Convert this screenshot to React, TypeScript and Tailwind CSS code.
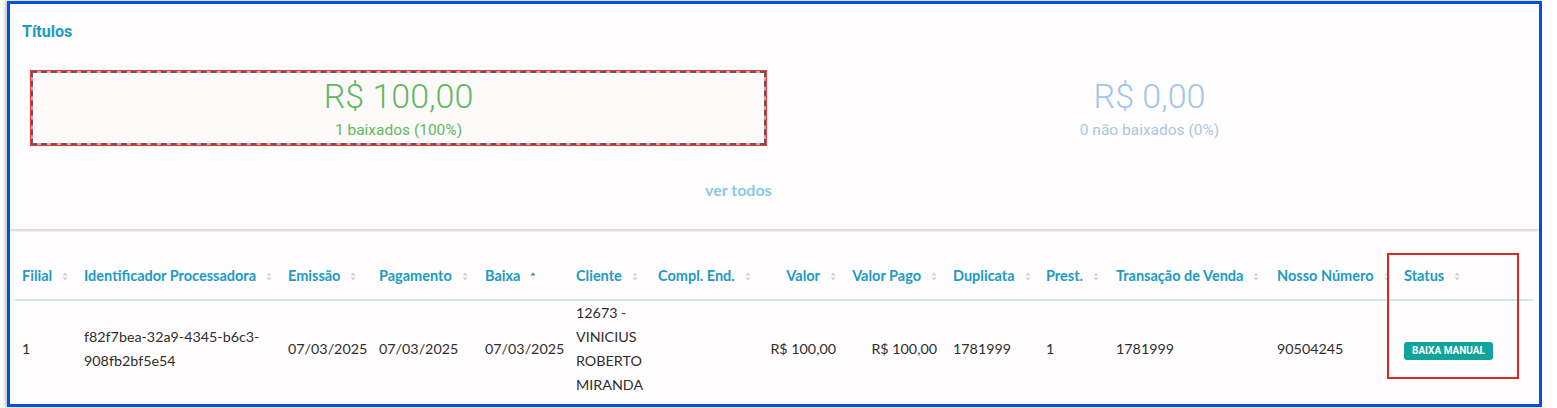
import React from "react";

type Col = {
  label: string;
  width: string;
  right?: boolean;
  active?: boolean;
};

const columns: Col[] = [
  { label: "Filial", width: "w-[62px]" },
  { label: "Identificador Processadora", width: "w-[204px]" },
  { label: "Emissão", width: "w-[91px]" },
  { label: "Pagamento", width: "w-[106px]" },
  { label: "Baixa", width: "w-[91px]", active: true },
  { label: "Cliente", width: "w-[82px]" },
  { label: "Compl. End.", width: "w-[110px]" },
  { label: "Valor", width: "w-[84px]", right: true },
  { label: "Valor Pago", width: "w-[101px]", right: true },
  { label: "Duplicata", width: "w-[93px]" },
  { label: "Prest.", width: "w-[70px]" },
  { label: "Transação de Venda", width: "w-[161px]" },
  { label: "Nosso Número", width: "w-[127px]" },
  { label: "Status", width: "w-[137px]" },
];

function SortIcon({ active }: { active?: boolean }) {
  return (
    <svg width="6" height="9" viewBox="0 0 6 9" className="shrink-0">
      <path d="M3 0.5 L5.6 3.6 H0.4 Z" fill={active ? "#3d86a8" : "#d3d3d3"} />
      <path d="M3 8.5 L5.6 5.4 H0.4 Z" fill={active ? "#ececec" : "#d3d3d3"} />
    </svg>
  );
}

function Summary({
  amount,
  label,
  amountColor,
  labelColor,
}: {
  amount: string;
  label: string;
  amountColor: string;
  labelColor: string;
}) {
  return (
    <div className="flex flex-col items-center pt-[3px] pb-[3px] font-[Roboto,sans-serif]">
      <span className={`text-[34px] leading-[40px] font-light ${amountColor}`}>{amount}</span>
      <span className={`mt-[4px] text-[15.5px] leading-[20px] ${labelColor}`}>{label}</span>
    </div>
  );
}

export default function App() {
  return (
    <div className="min-h-[408px] bg-white pl-[7px] pt-[1px]">
      <div className="relative h-[406px] w-[1535px] overflow-hidden border-[3px] border-[#0050e6] bg-[#fffdfd] shadow-[-2px_0_3px_rgba(0,0,0,0.25)]">
        {/* resumo */}
        <section className="h-[225px] bg-[#fffdfd] px-[12px] pt-[18px] shadow-[0_2px_2px_rgba(0,0,0,0.16)]">
          <h2 className="font-[Roboto,sans-serif] text-[16px] leading-[20px] font-bold text-[#1b9ac4]">Títulos</h2>

          <div className="mx-[8px] mt-[28px] grid grid-cols-[737px_737px] gap-[14px]">
            <div className="border border-[#e53535] bg-[#ff9494]">
              <div className="border-2 border-dashed border-[#565d70] bg-[#fffafa] bg-clip-padding">
                <Summary
                  amount="R$ 100,00"
                  label="1 baixados (100%)"
                  amountColor="text-[#5fb862]"
                  labelColor="text-[#62b85c]"
                />
              </div>
            </div>
            <div className="pt-[3px]">
              <Summary
                amount="R$ 0,00"
                label="0 não baixados (0%)"
                amountColor="text-[#a0c6ea]"
                labelColor="text-[#a8c6e6]"
              />
            </div>
          </div>

          <div className="mt-[32px] pl-[683px]">
            <a className="font-[Lato,sans-serif] text-[16px] leading-[20px] font-bold text-[#88cae2]">ver todos</a>
          </div>
        </section>

        {/* tabela */}
        <section className="relative mt-[3px] pl-[4px] pt-[20px] font-[Lato,sans-serif]">
          <table className="w-[1519px] table-fixed border-collapse">
            <thead>
              <tr className="border-b-2 border-[#d1e8ef]">
                {columns.map((col) => (
                  <th
                    key={col.label}
                    className={`${col.width} px-[8px] pt-[14px] pb-[13px] text-[14.5px] leading-[20px] font-bold text-[#1b9bc5]`}
                  >
                    <div className={`flex items-center gap-[10px] whitespace-nowrap ${col.right ? "justify-end" : "justify-start"}`}>
                      <span>{col.label}</span>
                      <SortIcon active={col.active} />
                    </div>
                  </th>
                ))}
              </tr>
            </thead>
            <tbody className="text-[14.3px] leading-[24px] text-[#2e2e2e]">
              <tr>
                <td className="px-[8px] align-middle">1</td>
                <td className="px-[8px] align-middle">
                  <div>f82f7bea-32a9-4345-b6c3-</div>
                  <div>908fb2bf5e54</div>
                </td>
                <td className="px-[8px] align-middle whitespace-nowrap">07/03/2025</td>
                <td className="px-[8px] align-middle whitespace-nowrap">07/03/2025</td>
                <td className="px-[8px] align-middle whitespace-nowrap">07/03/2025</td>
                <td className="px-[8px] align-middle whitespace-nowrap">
                  <div>12673 -</div>
                  <div>VINICIUS</div>
                  <div>ROBERTO</div>
                  <div>MIRANDA</div>
                </td>
                <td className="px-[8px] align-middle"></td>
                <td className="px-[8px] text-right align-middle whitespace-nowrap">R$ 100,00</td>
                <td className="px-[8px] text-right align-middle whitespace-nowrap">R$ 100,00</td>
                <td className="px-[8px] align-middle">1781999</td>
                <td className="px-[8px] align-middle">1</td>
                <td className="px-[8px] align-middle">1781999</td>
                <td className="px-[8px] align-middle">90504245</td>
                <td className="px-[8px] align-middle">
                  <span className="inline-flex h-[18px] items-center rounded-[3px] bg-[#12a49b] px-[8px] font-[Roboto,sans-serif] text-[10px] leading-none font-bold text-white">
                    BAIXA MANUAL
                  </span>
                </td>
              </tr>
            </tbody>
          </table>

          {/* destaque da coluna status */}
          <div className="pointer-events-none absolute left-[1377px] top-[21px] h-[126px] w-[132px] border-2 border-[#e02424]" />
        </section>
      </div>
    </div>
  );
}
